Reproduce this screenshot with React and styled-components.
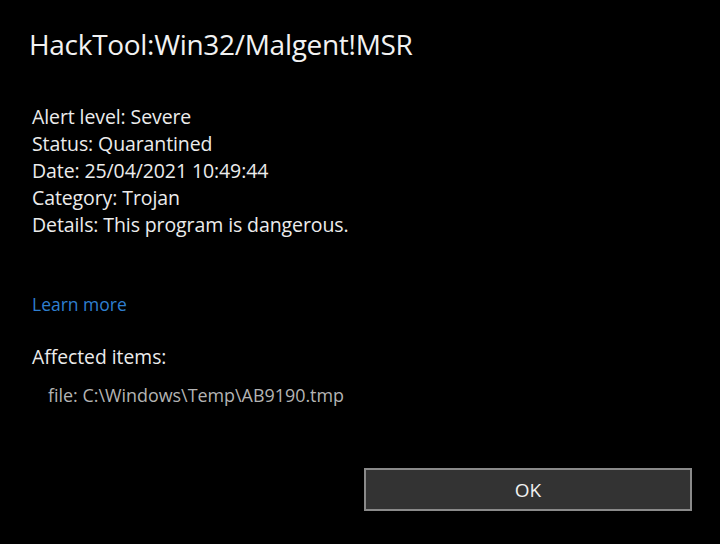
import React from "react";
import styled, { createGlobalStyle } from "styled-components";

const Global = createGlobalStyle`
  html, body {
    margin: 0;
    padding: 0;
    background: #000;
  }
  body {
    font-family: "Open Sans", "Noto Sans", sans-serif;
    color: #fff;
  }
`;

const Dialog = styled.div`
  width: 720px;
  height: 544px;
  box-sizing: border-box;
  background: #000;
  padding: 25px 28px 0 29px;
  display: flex;
  flex-direction: column;
`;

const Title = styled.h1`
  margin: 0;
  font-size: 28px;
  font-weight: 400;
  line-height: 38px;
  letter-spacing: -0.3px;
  color: #f2f2f2;
`;

const Info = styled.div`
  margin-top: 40px;
  padding-left: 3px;
  display: flex;
  flex-direction: column;
`;

const Line = styled.div`
  font-size: 19.5px;
  line-height: 27px;
  color: #ececec;
  letter-spacing: -0.1px;
`;

const LearnMore = styled.a`
  margin-top: 53px;
  padding-left: 3px;
  font-size: 17.5px;
  line-height: 27px;
  color: #2f7fd0;
  text-decoration: none;
  cursor: pointer;
  align-self: flex-start;
`;

const Heading = styled.div`
  margin-top: 25px;
  padding-left: 3px;
  font-size: 19.3px;
  line-height: 27px;
  color: #ececec;
`;

const FileLine = styled.div`
  margin-top: 13px;
  padding-left: 19px;
  font-size: 17.9px;
  line-height: 24px;
  color: #b4b4b4;
`;

const Footer = styled.div`
  margin-top: auto;
  margin-bottom: 33px;
  display: flex;
  justify-content: flex-end;
`;

const OkButton = styled.button`
  width: 328px;
  height: 43px;
  box-sizing: border-box;
  background: #333;
  border: 2px solid #8a8a8a;
  color: #f0f0f0;
  font-family: "Open Sans", "Noto Sans", sans-serif;
  font-size: 19px;
  cursor: pointer;
`;

const details = [
  "Alert level: Severe",
  "Status: Quarantined",
  "Date: 25/04/2021 10:49:44",
  "Category: Trojan",
  "Details: This program is dangerous.",
];

export default function App() {
  return (
    <>
      <Global />
      <Dialog>
        <Title>HackTool:Win32/Malgent!MSR</Title>
        <Info>
          {details.map((d) => (
            <Line key={d}>{d}</Line>
          ))}
        </Info>
        <LearnMore>Learn more</LearnMore>
        <Heading>Affected items:</Heading>
        <FileLine>file: C:\Windows\Temp\AB9190.tmp</FileLine>
        <Footer>
          <OkButton>OK</OkButton>
        </Footer>
      </Dialog>
    </>
  );
}
